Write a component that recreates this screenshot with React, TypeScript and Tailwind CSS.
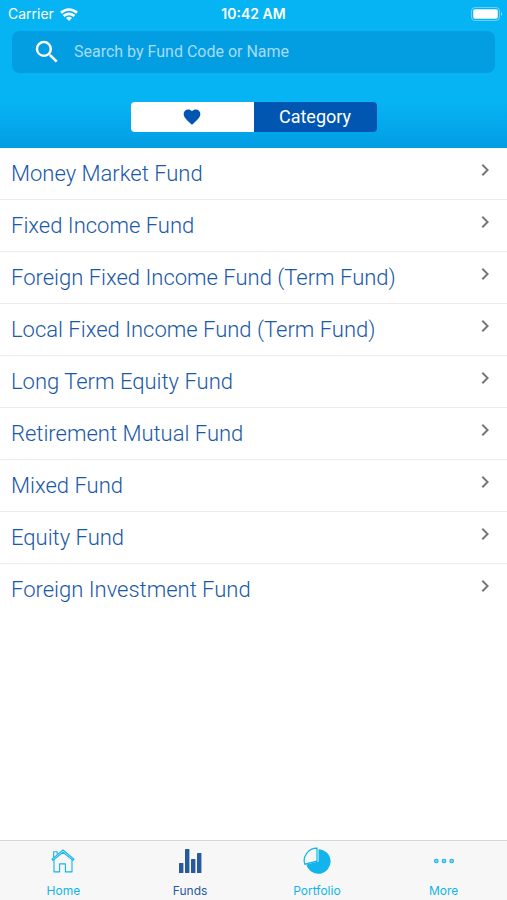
import { ReactNode, useState } from "react";
import { MdSearch, MdChevronRight, MdFavorite } from "react-icons/md";

const categories = [
    "Money Market Fund",
    "Fixed Income Fund",
    "Foreign Fixed Income Fund (Term Fund)",
    "Local Fixed Income Fund (Term Fund)",
    "Long Term Equity Fund",
    "Retirement Mutual Fund",
    "Mixed Fund",
    "Equity Fund",
    "Foreign Investment Fund",
]

const StatusBar = () => {
    return (
        <div className="grid grid-cols-3 items-center h-7 px-2 font-['Inter',sans-serif] text-sm text-white">
            <div className="flex items-center gap-1.5">
                <span>Carrier</span>
                <svg viewBox="0 0 18 13" className="w-[18px] h-[13px]" fill="none" stroke="currentColor" strokeWidth="2.6" aria-hidden="true">
                    <path d="M1 4.8C5.5.4 12.5.4 17 4.8" />
                    <path d="M3.6 8c3-2.9 7.8-2.9 10.8 0" />
                    <path d="M6 10c1.8-1.7 4.2-1.7 6 0l-3 3z" fill="currentColor" stroke="none" />
                </svg>
            </div>
            <div className="text-center font-semibold whitespace-nowrap">10:42 AM</div>
            <svg viewBox="0 0 32 14" className="w-8 h-3.5 justify-self-end -mr-1" aria-hidden="true">
                <rect x=".5" y=".5" width="28" height="13" rx="3.5" fill="none" stroke="white" strokeOpacity=".4" />
                <rect x="2.2" y="2.2" width="24.6" height="9.6" rx="1.8" fill="white" />
                <path d="M30 5c1.6.6 1.6 3.4 0 4z" fill="white" fillOpacity=".5" />
            </svg>
        </div>
    )
}

const HomeIcon = () => (
    <svg viewBox="0 0 24 24" className="w-6 h-6" fill="none" stroke="currentColor" strokeWidth="1.1" strokeLinejoin="round" aria-hidden="true">
        <path d="M1 10.2 12 1l11 9.2-1 1.1L12 3.2 2 11.3z" />
        <path d="M2.6 8.6V2.7h3.6v2.9" />
        <path d="M3 10.6v12.3h5.6v-8h5.8v8H21V10.6" />
    </svg>
)

const FundsIcon = () => (
    <svg viewBox="0 0 24 24" className="w-6 h-6" fill="currentColor" aria-hidden="true">
        <rect x="1" y="14" width="4.4" height="10" rx=".6" />
        <rect x="7" y="0" width="4.4" height="24" rx=".6" />
        <rect x="13" y="10" width="4.4" height="14" rx=".6" />
        <rect x="19" y="4" width="4.4" height="20" rx=".6" />
    </svg>
)

const PortfolioIcon = () => (
    <svg viewBox="0 0 28 28" className="w-7 h-7" aria-hidden="true">
        <path d="M15.5 2.2A12.3 12.3 0 1 1 3.4 17.6l12.1-3.1z" fill="currentColor" />
        <path d="M14 1.2v13L1.8 17.2C-.9 9.5 5.5 1.2 14 1.2z" fill="#f7f7f7" stroke="currentColor" strokeWidth="1.2" />
    </svg>
)

const MoreIcon = () => (
    <svg viewBox="0 0 24 24" className="w-6 h-6" fill="currentColor" fillOpacity=".5" stroke="currentColor" strokeWidth="1.1" aria-hidden="true">
        <circle cx="4.3" cy="12" r="1.8" />
        <circle cx="12" cy="12" r="1.8" />
        <circle cx="19.7" cy="12" r="1.8" />
    </svg>
)

const tabs: { name: string; icon: ReactNode }[] = [
    { name: "Home", icon: <HomeIcon /> },
    { name: "Funds", icon: <FundsIcon /> },
    { name: "Portfolio", icon: <PortfolioIcon /> },
    { name: "More", icon: <MoreIcon /> },
]

const App = () => {
    const [search, setSearch] = useState("")
    const activeTab = "Funds"

    return (
        <div className="flex flex-col min-h-screen bg-white font-['Roboto',sans-serif]">
            <header className="bg-linear-to-b from-[#06b3f3] from-70% to-[#029de3] pb-4">
                <StatusBar />
                <label className="flex items-center gap-3 h-[42px] mt-[3px] mx-3 pl-5 rounded-lg bg-[#039de2]">
                    <MdSearch className="size-[30px] shrink-0 text-white" />
                    <input
                        type="text"
                        aria-label="Search funds"
                        placeholder="Search by Fund Code or Name"
                        value={search}
                        onChange={(event) => setSearch(event.target.value)}
                        className="flex-1 min-w-0 bg-transparent text-base text-white placeholder:text-[#a6dcf6] outline-none"
                    />
                </label>
                <div className="grid grid-cols-2 w-[246px] h-[30px] mt-[29px] mx-auto rounded overflow-hidden">
                    <button type="button" aria-label="Favourites" className="flex items-center justify-center bg-white text-[#0056b0]">
                        <MdFavorite className="size-5" />
                    </button>
                    <button type="button" className="bg-[#0056b0] text-lg leading-7 text-white">
                        Category
                    </button>
                </div>
            </header>

            <ul className="flex-1 divide-y divide-[#ececec]">
                {categories.map((category) => (
                    <li key={category}>
                        <button type="button" className="flex justify-between w-full h-[51px] pl-[11px] pr-2.5 text-left">
                            <span className="self-center text-[22px] leading-7 font-light text-[#1a59a8]">{category}</span>
                            <MdChevronRight className="size-6 mt-2.5 text-[#777777]" />
                        </button>
                    </li>
                ))}
            </ul>

            <nav className="grid grid-cols-4 h-[60px] border-t border-[#d5d5d5] bg-[#f7f7f7] font-['Inter',sans-serif]">
                {tabs.map((tab) => (
                    <a
                        key={tab.name}
                        href={`#${tab.name.toLowerCase()}`}
                        className={`flex flex-col items-center gap-0.5 text-xs leading-4 ${
                            tab.name === activeTab ? "text-[#2759a0]" : "text-[#12b4ec]"
                        }`}
                    >
                        <span className="flex items-center justify-center h-10">{tab.icon}</span>
                        <span>{tab.name}</span>
                    </a>
                ))}
            </nav>
        </div>
    )
}

export default App
